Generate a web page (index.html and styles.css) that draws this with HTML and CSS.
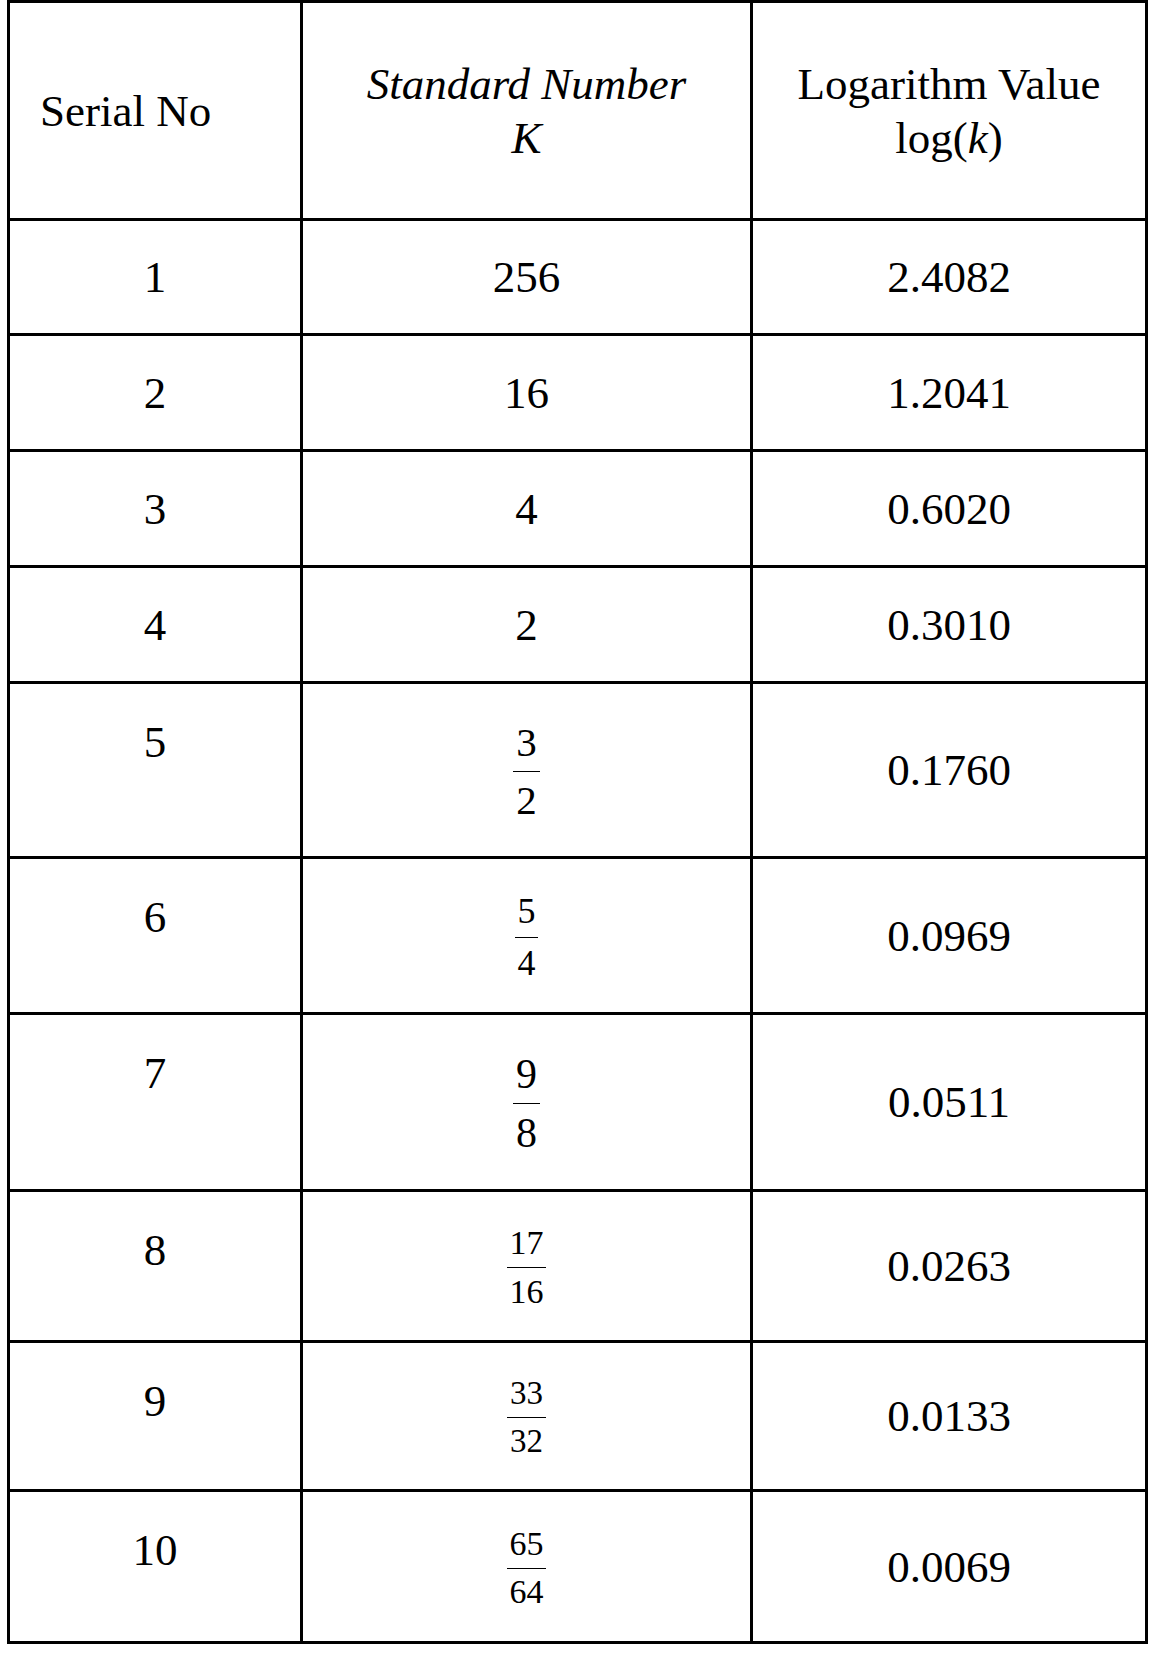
FILE: index.html
```html
<!DOCTYPE html>
<html lang="en">
<head>
<meta charset="utf-8">
<title>Standard Numbers and Logarithms</title>
<link rel="stylesheet" href="styles.css">
</head>
<body>
<table class="log-table">
  <thead>
    <tr class="row-head">
      <th class="col-serial head-serial">Serial No</th>
      <th class="col-std"><em>Standard Number</em><br><em>K</em></th>
      <th class="col-log">Logarithm Value<br>log(<em>k</em>)</th>
    </tr>
  </thead>
  <tbody>
    <tr class="row-115"><td class="serial">1</td><td class="std">256</td><td class="log">2.4082</td></tr>
    <tr class="row-116"><td class="serial">2</td><td class="std">16</td><td class="log">1.2041</td></tr>
    <tr class="row-116"><td class="serial">3</td><td class="std">4</td><td class="log">0.6020</td></tr>
    <tr class="row-116"><td class="serial">4</td><td class="std">2</td><td class="log">0.3010</td></tr>
    <tr class="row-175">
      <td class="serial serial-top">5</td>
      <td class="std std-frac"><span class="frac frac-41"><span class="num">3</span><span class="den">2</span></span></td>
      <td class="log">0.1760</td>
    </tr>
    <tr class="row-156">
      <td class="serial serial-top">6</td>
      <td class="std std-frac"><span class="frac frac-36"><span class="num">5</span><span class="den">4</span></span></td>
      <td class="log">0.0969</td>
    </tr>
    <tr class="row-177">
      <td class="serial serial-top">7</td>
      <td class="std std-frac"><span class="frac frac-42"><span class="num">9</span><span class="den">8</span></span></td>
      <td class="log">0.0511</td>
    </tr>
    <tr class="row-151">
      <td class="serial serial-top">8</td>
      <td class="std std-frac"><span class="frac frac-34"><span class="num">17</span><span class="den">16</span></span></td>
      <td class="log">0.0263</td>
    </tr>
    <tr class="row-149">
      <td class="serial serial-top">9</td>
      <td class="std std-frac"><span class="frac frac-33"><span class="num">33</span><span class="den">32</span></span></td>
      <td class="log">0.0133</td>
    </tr>
    <tr class="row-152">
      <td class="serial serial-top">10</td>
      <td class="std std-frac"><span class="frac frac-34"><span class="num">65</span><span class="den">64</span></span></td>
      <td class="log">0.0069</td>
    </tr>
  </tbody>
</table>
</body>
</html>
```

FILE: styles.css
```css
html, body {
  margin: 0;
  padding: 0;
  background: #ffffff;
}

body {
  font-family: "Liberation Serif", "Times New Roman", serif;
  color: #000000;
}

.log-table {
  margin-left: 7px;
  border-collapse: separate;
  border-spacing: 0;
  table-layout: fixed;
  width: 1141px;
  border-top: 3px solid #000;
  border-left: 3px solid #000;
  font-size: 45px;
  line-height: 54px;
}

.log-table th,
.log-table td {
  box-sizing: border-box;
  border-right: 3px solid #000;
  border-bottom: 3px solid #000;
  padding: 0;
  text-align: center;
  vertical-align: middle;
  font-weight: normal;
}

.log-table em {
  font-style: italic;
}

.col-serial { width: 293px; }
.col-std { width: 450px; }
.col-log { width: 395px; }

.log-table th.head-serial {
  text-align: left;
  padding-left: 30px;
}

.log-table td.serial-top {
  vertical-align: top;
  padding-top: 31px;
}

.log-table td.std-frac {
  padding-top: 3px;
}

.row-head { height: 218px; }
.row-115 { height: 115px; }
.row-116 { height: 116px; }
.row-175 { height: 175px; }
.row-156 { height: 156px; }
.row-177 { height: 177px; }
.row-151 { height: 151px; }
.row-149 { height: 149px; }
.row-152 { height: 152px; }

.frac {
  display: inline-flex;
  flex-direction: column;
  align-items: stretch;
  vertical-align: middle;
  line-height: 1;
  text-align: center;
}

.frac .num {
  padding: 0 0.08em 0.2em;
  border-bottom: 1.5px solid #000;
}

.frac .den {
  padding: 0.2em 0.08em 0;
}

.frac-33 { font-size: 33px; }
.frac-34 { font-size: 34px; }
.frac-36 { font-size: 36px; }
.frac-41 { font-size: 41px; }
.frac-42 { font-size: 42px; }
```
